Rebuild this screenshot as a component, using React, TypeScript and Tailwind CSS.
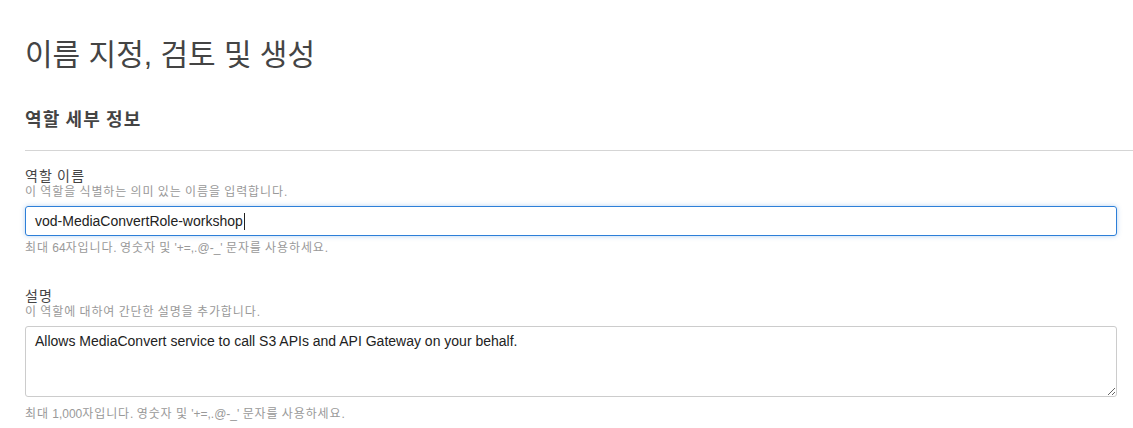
import { useState } from "react";

const font = "font-['Liberation_Sans','Noto_Sans_CJK_KR',sans-serif]";

// Hangul runs render a touch narrower than the reference face, so widen just those.
function Ko({ text, wide = false }: { text: string; wide?: boolean }) {
  return (
    <>
      {text.split(/([\uAC00-\uD7A3]+)/).map((s, i) =>
        i % 2 ? (
          <span key={i} className={wide ? "tracking-[1.2px]" : "tracking-[0.9px]"}>
            {s}
          </span>
        ) : (
          s
        )
      )}
    </>
  );
}

function Hint({ text, className = "" }: { text: string; className?: string }) {
  return (
    <p className={`text-[12px] leading-[15px] text-[#999] ${className}`}>
      <Ko text={text} />
    </p>
  );
}

export default function App() {
  const [desc, setDesc] = useState("Allows MediaConvert service to call S3 APIs and API Gateway on your behalf.");

  return (
    <div className={`min-h-screen bg-white pl-[25px] ${font}`}>
      <h1 className="pt-[37px] text-[30px] leading-[36px] font-normal text-[#444]">이름 지정, 검토 및 생성</h1>

      <h2 className="mt-[35px] text-[18px] leading-[24px] font-bold text-[#444]">
        <Ko text="역할 세부 정보" wide />
      </h2>
      <div className="mt-[18px] border-t border-[#d5d5d5]" />

      <div className="pr-[16px]">
        <div className="mt-[17px]">
          <label className="block text-[14px] leading-[17px] text-[#444]">
            <Ko text="역할 이름" wide />
          </label>
          <Hint text="이 역할을 식별하는 의미 있는 이름을 입력합니다." />
          <div className="mt-[6px] flex h-[30px] items-center rounded-[3px] border border-[#2d7fd8] px-[9px] text-[14px] text-[#222] shadow-[0_0_5px_rgba(45,127,216,0.35)]">
            <span>vod-MediaConvertRole-workshop</span>
            <span className="ml-px h-[17px] w-px bg-[#222]" />
          </div>
          <Hint className="mt-[5px]" text="최대 64자입니다. 영숫자 및 '+=,.@-_' 문자를 사용하세요." />
        </div>

        <div className="mt-[32px]">
          <label className="block text-[14px] leading-[17px] text-[#444]">
            <Ko text="설명" wide />
          </label>
          <Hint text="이 역할에 대하여 간단한 설명을 추가합니다." />
          <textarea
            value={desc}
            onChange={(e) => setDesc(e.target.value)}
            className="mt-[6px] block h-[71px] w-full resize-y rounded-[3px] border border-[#ccc] px-[9px] pt-[4px] text-[14px] leading-[20px] text-[#222] outline-none"
          />
          <Hint className="mt-[10px]" text="최대 1,000자입니다. 영숫자 및 '+=,.@-_' 문자를 사용하세요." />
        </div>
      </div>
    </div>
  );
}
